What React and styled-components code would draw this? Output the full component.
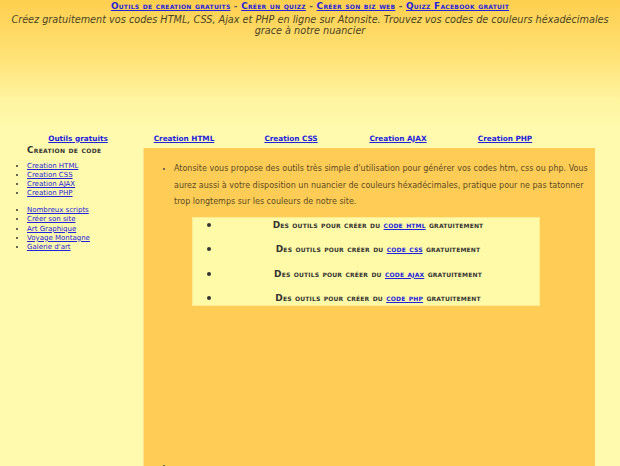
import styled, { createGlobalStyle } from "styled-components";

const Global = createGlobalStyle`
  html, body {
    margin: 0;
    padding: 0;
    background: #fffaad;
    font-family: "DejaVu Sans", Verdana, sans-serif;
    overflow: hidden;
  }
`;

const Page = styled.div`
  width: 620px;
  height: 466px;
  overflow: hidden;
`;

const Header = styled.header`
  height: 128px;
  background: linear-gradient(#ffcf4f 0px, #ffdf70 50px, #fff4a0 100px, #fffaad 128px);
  text-align: center;
  padding-top: 1px;
  box-sizing: border-box;
`;

const TopLinks = styled.div`
  font-size: 8.9px;
  letter-spacing: 0.27px;
  font-weight: bold;
  font-variant: small-caps;
  color: #555;
  line-height: 10px;
  white-space: nowrap;
`;

const Link = styled.a`
  color: #2222dd;
  text-decoration: underline;
`;

const Tagline = styled.p`
  margin: 3px 6px 0;
  font-size: 9.7px;
  font-style: italic;
  color: #4a4426;
  line-height: 11px;
`;

const Nav = styled.nav`
  display: flex;
  align-items: center;
  height: 20px;
  font-size: 7.3px;
  font-weight: bold;
`;

const NavCell = styled.div`
  width: ${(p) => p.$w}px;
  flex-shrink: 0;
  display: flex;
  justify-content: center;
  white-space: nowrap;
`;

const Body = styled.div`
  display: flex;
  align-items: flex-start;
`;

const Sidebar = styled.aside`
  width: 143px;
  flex-shrink: 0;
`;

const SideTitle = styled.div`
  margin-top: -3px;
  padding-left: 27px;
  font-size: 8.8px;
  letter-spacing: 0.3px;
  font-weight: bold;
  font-variant: small-caps;
  color: #333;
  line-height: 10px;
`;

const SideList = styled.ul`
  margin: 7px 0 0;
  padding-left: 27px;
  font-size: 7px;
  line-height: 9.1px;
  & + & {
    margin-top: 8px;
  }
  li::marker {
    color: #333;
  }
`;

const Panel = styled.main`
  width: 452px;
  height: 330px;
  background: #ffcd55;
  border-left: 1px solid #ffe38a;
  box-sizing: border-box;
  padding: 13px 0 0;
`;

const Intro = styled.ul`
  margin: 0;
  padding: 0 6px 0 30px;
  font-size: 8px;
  line-height: 16.6px;
  color: #5a4a24;
  li::marker {
    color: #444;
  }
`;

const ToolBox = styled.ul`
  width: 348px;
  margin: 6px 0 0 48px;
  padding: 0;
  box-sizing: border-box;
  height: 89px;
  background: #fffaa8;
  border: 1px solid #ffeb90;
  list-style: none;
`;

const ToolRow = styled.li`
  display: flex;
  align-items: center;
  height: 14px;
  margin-bottom: 10.4px;
  font-size: 9px;
  letter-spacing: 0.17px;
  font-weight: bold;
  font-variant: small-caps;
  color: #333;
  white-space: nowrap;
  &::before {
    content: "";
    width: 4px;
    height: 4px;
    border-radius: 50%;
    background: #333;
    margin-left: 14px;
  }
`;

const ToolText = styled.span`
  flex: 1;
  text-align: center;
  padding-left: 6px;
`;

const Tail = styled.ul`
  margin: 155px 0 0;
  padding-left: 30px;
  font-size: 8px;
  color: #444;
`;

const tools = ["code html", "code css", "code ajax", "code php"];

const navItems = [
  ["Outils gratuits", 156],
  ["Creation HTML", 56],
  ["Creation CSS", 158],
  ["Creation AJAX", 56],
  ["Creation PHP", 158],
];

export default function App() {
  return (
    <Page>
      <Global />
      <Header>
        <TopLinks>
          <Link href="#">Outils de creation gratuits</Link> - <Link href="#">Créer un quizz</Link> -{" "}
          <Link href="#">Créer son biz web</Link> - <Link href="#">Quizz Facebook gratuit</Link>
        </TopLinks>
        <Tagline>
          Créez gratuitement vos codes HTML, CSS, Ajax et PHP en ligne sur Atonsite. Trouvez vos codes de couleurs
          héxadécimales grace à notre nuancier
        </Tagline>
      </Header>
      <Nav>
        {navItems.map(([label, w]) => (
          <NavCell key={label} $w={w}>
            <Link href="#">{label}</Link>
          </NavCell>
        ))}
      </Nav>
      <Body>
        <Sidebar>
          <SideTitle>Creation de code</SideTitle>
          <SideList>
            <li><Link href="#">Creation HTML</Link></li>
            <li><Link href="#">Creation CSS</Link></li>
            <li><Link href="#">Creation AJAX</Link></li>
            <li><Link href="#">Creation PHP</Link></li>
          </SideList>
          <SideList>
            <li><Link href="#">Nombreux scripts</Link></li>
            <li><Link href="#">Créer son site</Link></li>
            <li><Link href="#">Art Graphique</Link></li>
            <li><Link href="#">Voyage Montagne</Link></li>
            <li><Link href="#">Galerie d'art</Link></li>
          </SideList>
        </Sidebar>
        <Panel>
          <Intro>
            <li>
              Atonsite vous propose des outils très simple d'utilisation pour générer vos codes htm, css ou php. Vous
              aurez aussi à votre disposition un nuancier de couleurs héxadécimales, pratique pour ne pas tatonner
              trop longtemps sur les couleurs de notre site.
            </li>
          </Intro>
          <ToolBox>
            {tools.map((t) => (
              <ToolRow key={t}>
                <ToolText>
                  Des outils pour créer du <Link href="#">{t}</Link> gratuitement
                </ToolText>
              </ToolRow>
            ))}
          </ToolBox>
          <Tail>
            <li>&nbsp;</li>
          </Tail>
        </Panel>
      </Body>
    </Page>
  );
}
